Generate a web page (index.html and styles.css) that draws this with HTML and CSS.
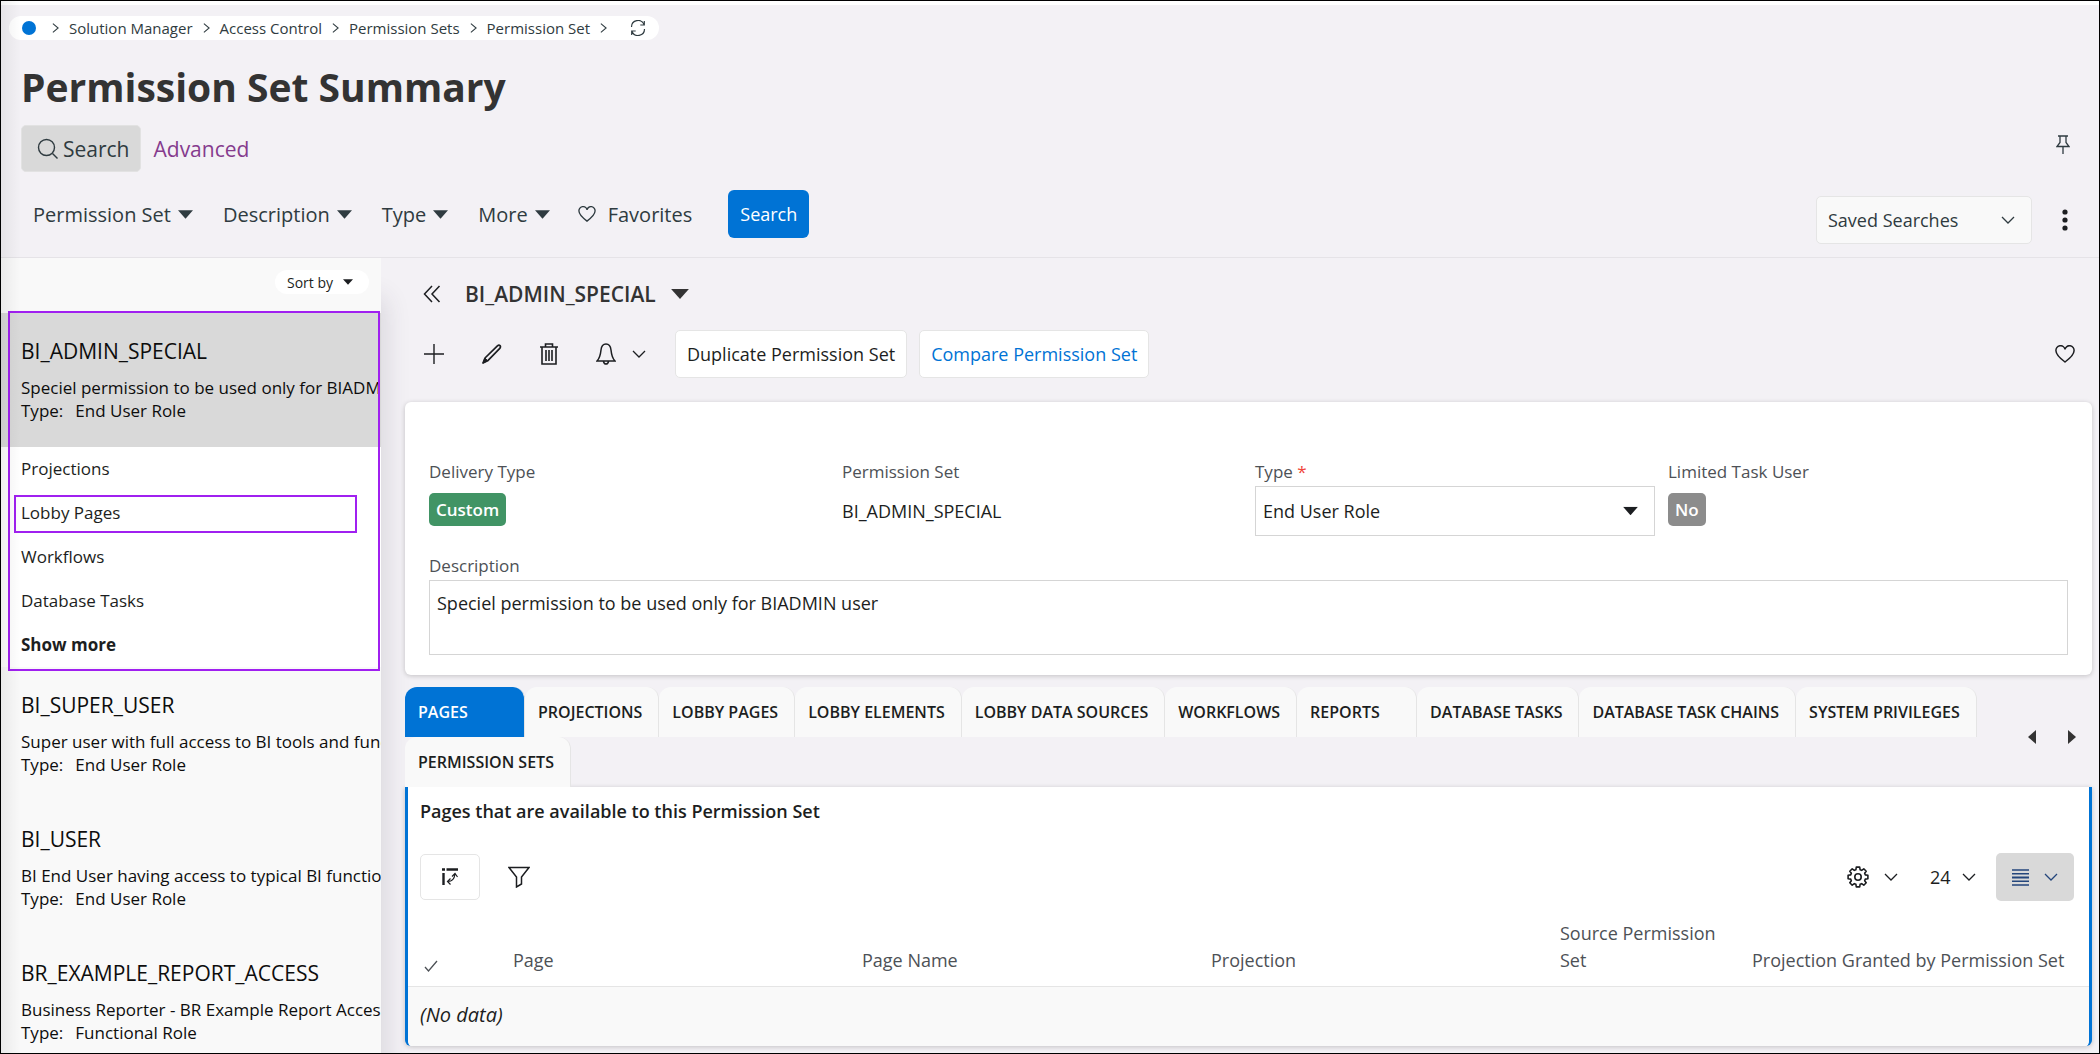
FILE: index.html
```html
<!DOCTYPE html>
<html lang="en">
<head>
    <meta charset="utf-8">
    <title>Permission Set Summary</title>
    <link rel="stylesheet" href="styles.css">
</head>
<body>
    <svg class="sprite" width="0" height="0">
        <symbol id="chevron" viewBox="0 0 14 8"><path d="M1 1l6 6 6-6" fill="none" stroke="currentColor" stroke-width="1.3"/></symbol>
        <symbol id="chevron-right" viewBox="0 0 8 12"><path d="M1 1l6 5-6 5" fill="none" stroke="currentColor" stroke-width="1.2"/></symbol>
        <symbol id="caret" viewBox="0 0 16 9"><path d="M0 0h16l-8 9z" fill="currentColor"/></symbol>
        <symbol id="heart" viewBox="0 0 20 18"><path d="M10 17C4 12.5 1 9.5 1 6A4.5 4.5 0 0 1 10 4.5 4.5 4.5 0 0 1 19 6C19 9.5 16 12.5 10 17z" fill="none" stroke="currentColor" stroke-width="1.5"/></symbol>
    </svg>

    <div class="page">
        <header class="header">
            <nav class="breadcrumb">
                <a href="#" class="home-dot" aria-label="Home"></a>
                <svg class="crumb-arrow"><use href="#chevron-right"/></svg>
                <a href="#">Solution Manager</a>
                <svg class="crumb-arrow"><use href="#chevron-right"/></svg>
                <a href="#">Access Control</a>
                <svg class="crumb-arrow"><use href="#chevron-right"/></svg>
                <a href="#">Permission Sets</a>
                <svg class="crumb-arrow"><use href="#chevron-right"/></svg>
                <a href="#">Permission Set</a>
                <svg class="crumb-arrow"><use href="#chevron-right"/></svg>
                <button class="icon-btn refresh" aria-label="Refresh">
                    <svg width="16" height="16" viewBox="0 0 16 16" fill="none" stroke="currentColor" stroke-width="1.2"><path d="M1.5 7A6.5 6.5 0 0 1 14 4.5M14.5 9A6.5 6.5 0 0 1 2 11.5M14.3 1v4h-4M1.7 15v-4h4"/></svg>
                </button>
            </nav>

            <h1>Permission Set Summary</h1>

            <div class="mode-row">
                <button class="mode-btn">
                    <svg width="22" height="22" viewBox="0 0 22 22" fill="none" stroke="currentColor" stroke-width="1.4"><circle cx="9.5" cy="9.5" r="8"/><path d="M15.5 15.5l5 5"/></svg>
                    Search
                </button>
                <a href="#" class="advanced">Advanced</a>
                <button class="icon-btn pin" aria-label="Pin">
                    <svg width="14" height="20" viewBox="0 0 14 20" fill="none" stroke="currentColor" stroke-width="1.3"><path d="M2 1h10M4 1v6.5L1 11.5h12L10 7.5V1M7 11.5V19"/></svg>
                </button>
            </div>

            <div class="filter-row">
                <button class="filter">Permission Set <svg class="caret"><use href="#caret"/></svg></button>
                <button class="filter">Description <svg class="caret"><use href="#caret"/></svg></button>
                <button class="filter">Type <svg class="caret"><use href="#caret"/></svg></button>
                <button class="filter">More <svg class="caret"><use href="#caret"/></svg></button>
                <button class="filter favorites"><svg width="18" height="16"><use href="#heart"/></svg> Favorites</button>
                <button class="search-btn">Search</button>
                <div class="saved">
                    <select class="saved-select" aria-label="Saved Searches">
                        <option>Saved Searches</option>
                    </select>
                    <svg class="chevron"><use href="#chevron"/></svg>
                </div>
                <button class="icon-btn dots" aria-label="More options">
                    <svg width="6" height="22" viewBox="0 0 6 22" fill="currentColor"><circle cx="3" cy="3" r="2.6"/><circle cx="3" cy="11" r="2.6"/><circle cx="3" cy="19" r="2.6"/></svg>
                </button>
            </div>
        </header>

        <div class="content">
            <aside class="sidebar">
                <div class="sort-row">
                    <button class="sort-btn">Sort by <svg width="10" height="6"><use href="#caret"/></svg></button>
                </div>
                <div class="selected-group">
                    <div class="item selected">
                        <h2>BI_ADMIN_SPECIAL</h2>
                        <p>Speciel permission to be used only for BIADMIN user</p>
                        <p><span class="item-label">Type:</span>End User Role</p>
                    </div>
                    <ul class="sub-list">
                        <li><a href="#">Projections</a></li>
                        <li class="marked"><a href="#">Lobby Pages</a></li>
                        <li><a href="#">Workflows</a></li>
                        <li><a href="#">Database Tasks</a></li>
                        <li><a href="#" class="show-more">Show more</a></li>
                    </ul>
                </div>
                <div class="item">
                    <h2>BI_SUPER_USER</h2>
                    <p>Super user with full access to BI tools and functionality</p>
                    <p><span class="item-label">Type:</span>End User Role</p>
                </div>
                <div class="item">
                    <h2>BI_USER</h2>
                    <p>BI End User having access to typical BI functionality</p>
                    <p><span class="item-label">Type:</span>End User Role</p>
                </div>
                <div class="item">
                    <h2>BR_EXAMPLE_REPORT_ACCESS</h2>
                    <p>Business Reporter - BR Example Report Access</p>
                    <p><span class="item-label">Type:</span>Functional Role</p>
                </div>
            </aside>

            <main class="main">
                <div class="record-title">
                    <button class="icon-btn" aria-label="Collapse list">
                        <svg width="18" height="18" viewBox="0 0 18 18" fill="none" stroke="currentColor" stroke-width="1.5"><path d="M9 1L1.5 9 9 17M16.5 1L9 9l7.5 8"/></svg>
                    </button>
                    <button class="record-name">BI_ADMIN_SPECIAL <svg width="18" height="10"><use href="#caret"/></svg></button>
                </div>

                <div class="toolbar">
                    <button class="icon-btn" aria-label="New">
                        <svg width="20" height="20" viewBox="0 0 20 20" fill="none" stroke="currentColor" stroke-width="1.4"><path d="M10 0v20M0 10h20"/></svg>
                    </button>
                    <button class="icon-btn" aria-label="Edit">
                        <svg width="20" height="20" viewBox="0 0 20 20" fill="none" stroke="currentColor" stroke-width="1.7" stroke-linejoin="round"><path d="M1 19l2-5L15.4 1.8q1.6-1.3 2.6-.2t-.2 2.800L5.600 16.800z"/><path d="M1 19l2-5 2.600 2.800z" fill="currentColor" stroke-width="1"/></svg>
                    </button>
                    <button class="icon-btn" aria-label="Delete">
                        <svg width="18" height="22" viewBox="0 0 18 22" fill="none" stroke="currentColor" stroke-width="1.6"><path d="M0 4h18M5.5 4V1h7v3M2 4v17h14V4"/><path d="M6 7v11M9 7v11M12 7v11"/></svg>
                    </button>
                    <button class="icon-btn bell" aria-label="Notifications">
                        <svg width="20" height="22" viewBox="0 0 20 22" fill="none" stroke="currentColor" stroke-width="1.5"><path d="M1 18c3-3 3.5-6 4-11 .4-4 2-6 5-6s4.6 2 5 6c.5 5 1 8 4 11zM7.5 18.5q.5 2.5 2.5 2.5t2.500-2.5"/></svg>
                        <svg class="chevron"><use href="#chevron"/></svg>
                    </button>
                    <button class="action-btn">Duplicate Permission Set</button>
                    <button class="action-btn action-link">Compare Permission Set</button>
                    <button class="icon-btn like" aria-label="Add to favorites">
                        <svg width="20" height="18"><use href="#heart"/></svg>
                    </button>
                </div>

                <section class="card">
                    <div class="fields">
                        <div class="field">
                            <span class="label">Delivery Type</span>
                            <span class="badge badge-green">Custom</span>
                        </div>
                        <div class="field">
                            <span class="label">Permission Set</span>
                            <span class="value">BI_ADMIN_SPECIAL</span>
                        </div>
                        <div class="field">
                            <label class="label" for="type">Type <span class="required">*</span></label>
                            <div class="select-wrap">
                                <select id="type" class="select">
                                    <option>End User Role</option>
                                </select>
                                <svg class="caret"><use href="#caret"/></svg>
                            </div>
                        </div>
                        <div class="field">
                            <span class="label">Limited Task User</span>
                            <span class="badge badge-grey">No</span>
                        </div>
                    </div>
                    <div class="description">
                        <label class="label" for="description">Description</label>
                        <textarea id="description" class="textarea">Speciel permission to be used only for BIADMIN user</textarea>
                    </div>
                </section>

                <div class="tab-bar">
                    <div class="tabs">
                        <button class="tab active">PAGES</button>
                        <button class="tab">PROJECTIONS</button>
                        <button class="tab">LOBBY PAGES</button>
                        <button class="tab">LOBBY ELEMENTS</button>
                        <button class="tab">LOBBY DATA SOURCES</button>
                        <button class="tab">WORKFLOWS</button>
                        <button class="tab">REPORTS</button>
                        <button class="tab">DATABASE TASKS</button>
                        <button class="tab">DATABASE TASK CHAINS</button>
                        <button class="tab">SYSTEM PRIVILEGES</button>
                        <button class="tab">PERMISSION SETS</button>
                    </div>
                    <div class="tab-nav">
                        <button class="icon-btn" aria-label="Previous tab"><svg width="8" height="14" viewBox="0 0 8 14"><path d="M8 0v14L0 7z" fill="currentColor"/></svg></button>
                        <button class="icon-btn" aria-label="Next tab"><svg width="8" height="14" viewBox="0 0 8 14"><path d="M0 0v14l8-7z" fill="currentColor"/></svg></button>
                    </div>
                </div>

                <section class="panel">
                    <h3>Pages that are available to this Permission Set</h3>
                    <div class="table-tools">
                        <button class="box-btn" aria-label="Arrange columns">
                            <svg width="18" height="18" viewBox="0 0 18 18" fill="none" stroke="currentColor"><path d="M1 1.5h3M5.5 1.5H17" stroke-width="2.4"/><path d="M2.5 5v12" stroke-width="2.4"/><path d="M7 13.5q6 0 7-7.5M11 8.5l3-3 2.5 3.5M9.5 10.5l-3 3 3 3" stroke-width="1.2"/></svg>
                        </button>
                        <button class="icon-btn" aria-label="Filter">
                            <svg width="22" height="22" viewBox="0 0 22 22" fill="none" stroke="currentColor" stroke-width="1.5"><path d="M1 1.5h20L13.5 11v7L8.5 21V11z"/></svg>
                        </button>
                        <button class="icon-btn gear" aria-label="Settings">
                            <svg width="22" height="22" viewBox="0 0 22 22" fill="none" stroke="currentColor" stroke-width="1.6" stroke-linejoin="round"><path d="M18.3 8.9L20.9 9.3v3.4L18.3 13.1 17.65 14.68 19.2 16.8 16.8 19.2 14.68 17.65 13.1 18.3 12.7 20.9H9.3L8.9 18.3 7.32 17.65 5.2 19.2 2.8 16.8 4.35 14.68 3.7 13.1 1.1 12.7V9.3L3.7 8.9 4.35 7.32 2.8 5.2 5.2 2.8 7.32 4.35 8.9 3.7 9.3 1.1h3.4L13.1 3.7 14.68 4.35 16.8 2.8 19.2 5.2 17.65 7.32z"/><circle cx="11" cy="11" r="3.2"/></svg>
                            <svg class="chevron"><use href="#chevron"/></svg>
                        </button>
                        <div class="page-size">
                            <select aria-label="Rows per page">
                                <option>24</option>
                            </select>
                            <svg class="chevron"><use href="#chevron"/></svg>
                        </div>
                        <button class="view-btn" aria-label="View">
                            <svg width="17" height="17" viewBox="0 0 17 17" stroke="currentColor" stroke-width="1.4"><path d="M0 1h17M0 4.7h17M0 12.3h17M0 16h17"/><path d="M0 8.5h17" stroke-width="2"/></svg>
                            <svg class="chevron"><use href="#chevron"/></svg>
                        </button>
                    </div>
                    <table class="table">
                        <thead>
                            <tr>
                                <th class="col-check"><svg width="14" height="12" viewBox="0 0 14 12" fill="none" stroke="currentColor" stroke-width="1.3"><path d="M1 7l3.5 4L13 1"/></svg></th>
                                <th>Page</th>
                                <th>Page Name</th>
                                <th>Projection</th>
                                <th class="col-source">Source Permission Set</th>
                                <th>Projection Granted by Permission Set</th>
                            </tr>
                        </thead>
                        <tbody>
                            <tr>
                                <td colspan="6">(No data)</td>
                            </tr>
                        </tbody>
                    </table>
                </section>
            </main>
        </div>
    </div>
</body>
</html>
```
FILE: styles.css
```css
* {
    box-sizing: border-box;
}
body {
    margin: 0;
    font-family: "Open Sans", "Noto Sans", sans-serif;
    font-size: 18px;
    color: #1c1e21;
}
button, select, textarea {
    font: inherit;
    color: inherit;
    margin: 0;
}
button {
    padding: 0;
    border: none;
    background: none;
    white-space: nowrap;
    cursor: pointer;
}
a {
    color: inherit;
    text-decoration: none;
}
svg {
    display: block;
    flex: none;
}
h1, h2, h3, p, ul {
    margin: 0;
    padding: 0;
}
.sprite {
    position: absolute;
}
.page {
    position: relative;
    display: flex;
    flex-direction: column;
    height: 100vh;
    overflow: hidden;
    border: 1px solid #000;
    background: #f3f1f5;
}
/* soft shade down the left edge */
.page::after {
    content: "";
    position: absolute;
    top: 0;
    bottom: 0;
    left: 0;
    width: 20px;
    background: linear-gradient(to right, rgba(0,0,0,0.06), rgba(0,0,0,0));
    pointer-events: none;
}
.icon-btn {
    display: flex;
    align-items: center;
}
.chevron {
    width: 14px;
    height: 8px;
}
.caret {
    width: 15px;
    height: 9px;
}

/* Header */
.header {
    flex: none;
    padding: 11px 0 13px 20px;
    border-top: 4px solid #fff;
    border-bottom: 1px solid #e5e3e7;
    color: #2f3b40;
}
.breadcrumb {
    display: flex;
    align-items: center;
    gap: 10px;
    width: max-content;
    height: 24px;
    margin-left: -12px;
    padding: 0 13px;
    border-radius: 12px;
    background: #fff;
    font-size: 15px;
}
.home-dot {
    width: 14px;
    height: 14px;
    margin-right: 6px;
    border-radius: 50%;
    background: #0073d5;
}
.crumb-arrow {
    width: 7px;
    height: 12px;
}
.refresh {
    margin-left: 13px;
}
h1 {
    margin-top: 20px;
    font-size: 39px;
    line-height: 54px;
    color: #333;
}
.mode-row {
    display: flex;
    align-items: center;
    gap: 13px;
    margin-top: 11px;
    padding-right: 29px;
    font-size: 21px;
}
.mode-btn {
    display: flex;
    align-items: center;
    gap: 4px;
    height: 47px;
    padding: 0 10px 0 15px;
    border: 1px solid #e2e2e2;
    border-radius: 5px;
    background: #d9d9d9;
}
.advanced {
    color: #853b8d;
}
.pin {
    margin-left: auto;
    margin-bottom: 8px;
}
.filter-row {
    display: flex;
    align-items: center;
    gap: 30px;
    margin-top: 12px;
    padding: 0 31px 0 12px;
}
.filter {
    display: flex;
    align-items: center;
    gap: 7px;
    font-size: 20px;
}
.favorites {
    gap: 12px;
    margin-left: -2px;
}
.search-btn {
    height: 48px;
    padding: 0 12px;
    margin-left: 6px;
    border-radius: 6px;
    background: #0073d5;
    color: #fff;
}
.saved {
    position: relative;
    width: 216px;
    margin-left: auto;
    margin-top: 12px;
}
.saved-select {
    appearance: none;
    width: 100%;
    height: 48px;
    padding: 0 11px;
    border: 1px solid #e5e5e5;
    border-radius: 5px;
    background: #f9f9f9;
}
.saved .chevron, .select-wrap .caret, .page-size .chevron {
    position: absolute;
    top: 50%;
    right: 17px;
    transform: translateY(-50%);
    pointer-events: none;
}
.dots {
    margin-top: 12px;
    color: #1c1e21;
}

/* Sidebar */
.content {
    display: flex;
    flex: 1;
    min-height: 0;
}
.sidebar {
    flex: none;
    width: 380px;
    background: #f9f9f9;
    box-shadow: 4px 40px 24px rgba(60,50,70,0.14);
}
.sort-row {
    display: flex;
    justify-content: flex-end;
    padding: 12px 12px 19px;
}
.sort-btn {
    display: flex;
    align-items: center;
    gap: 10px;
    height: 24px;
    padding: 0 16px 0 12px;
    border-radius: 12px;
    background: #fff;
    font-size: 14px;
}
.selected-group {
    position: relative;
}
.selected-group::after {
    content: "";
    position: absolute;
    top: -2px;
    right: 1px;
    bottom: -4px;
    left: 7px;
    border: 2px solid #a020f0;
    pointer-events: none;
}
.item {
    height: 134px;
    padding: 22px 0 0 20px;
    overflow: hidden;
    color: #0d0d0d;
}
.item.selected {
    background: #d9d9d9;
}
.item h2 {
    margin-bottom: 9px;
    font-size: 21px;
    font-weight: 400;
    line-height: 32px;
}
.item p {
    font-size: 17px;
    line-height: 23px;
    white-space: nowrap;
}
.item-label {
    margin-right: 12px;
}
.sub-list {
    list-style: none;
    background: #fff;
    font-size: 17px;
}
.sub-list li {
    display: flex;
    align-items: center;
    height: 44px;
    padding: 0 0 2px 20px;
}
.marked {
    position: relative;
}
.marked::after {
    content: "";
    position: absolute;
    top: 4px;
    right: 24px;
    bottom: 2px;
    left: 13px;
    border: 2px solid #a020f0;
    pointer-events: none;
}
.show-more {
    font-weight: 700;
}

/* Record */
.main {
    flex: 1;
    min-width: 0;
    padding: 20px 7px 0 24px;
}
.record-title {
    display: flex;
    align-items: center;
    gap: 24px;
    height: 32px;
    padding-left: 18px;
}
.record-name {
    display: flex;
    align-items: center;
    gap: 15px;
    font-size: 21px;
    font-weight: 600;
    color: #333;
}
.toolbar {
    display: flex;
    align-items: center;
    gap: 38px;
    margin-top: 20px;
    padding: 0 17px 0 19px;
}
.bell {
    gap: 16px;
    margin-right: -9px;
}
.action-btn {
    height: 48px;
    padding: 0 11px;
    border: 1px solid #e5e5e5;
    border-radius: 5px;
    background: #fff;
}
.action-link {
    margin-left: -26px;
    color: #0073d5;
}
.like {
    margin-left: auto;
}
.card {
    margin-top: 24px;
    padding: 56px 24px 20px;
    border-radius: 6px;
    background: #fff;
    box-shadow: 0 1px 5px rgba(0,0,0,0.2);
}
.fields {
    display: grid;
    grid-template-columns: repeat(4, 1fr);
    gap: 13px;
}
.field {
    display: flex;
    flex-direction: column;
    align-items: flex-start;
}
.label {
    display: block;
    font-size: 17px;
    line-height: 28px;
    color: #4d5156;
}
.required {
    color: #f04438;
}
.badge {
    margin-top: 7px;
    padding: 0 7px;
    border-radius: 5px;
    color: #fff;
    font-size: 17px;
    font-weight: 600;
    line-height: 33px;
}
.badge-green {
    background: #419465;
}
.badge-grey {
    background: #8c8c8c;
}
.value {
    line-height: 50px;
}
.select-wrap {
    position: relative;
    width: 100%;
}
.select {
    appearance: none;
    display: block;
    width: 100%;
    height: 50px;
    padding: 0 7px;
    border: 1px solid #d5d5d5;
    border-radius: 0;
    background: #fff;
}
.description {
    margin-top: 16px;
}
.textarea {
    display: block;
    width: 100%;
    height: 75px;
    padding: 9px 7px;
    border: 1px solid #d5d5d5;
    line-height: 26px;
    resize: none;
}

/* Tabs */
.tab-bar {
    display: flex;
    align-items: center;
    margin-top: 12px;
}
.tabs {
    display: flex;
    flex: 1;
    flex-wrap: wrap;
}
.tab {
    min-width: 120px;
    height: 50px;
    padding: 0 16px 0 13px;
    border-right: 1px solid #e5e5e5;
    border-radius: 12px 12px 0 0;
    background: #f9f9f9;
    font-size: 16px;
    font-weight: 600;
    text-align: left;
}
.tab.active {
    background: #0073d5;
    color: #fff;
}
.tab-nav {
    display: flex;
    gap: 32px;
    padding: 0 16px 0 40px;
    color: #333;
}
.panel {
    border: solid #0073d5;
    border-width: 0 3px;
    border-radius: 0 0 6px 6px;
    background: #fff;
    box-shadow: 0 1px 5px rgba(0,0,0,0.2);
    overflow: hidden;
}
.panel h3 {
    padding: 11px 12px 0;
    font-size: 18px;
    font-weight: 600;
    line-height: 26px;
}
.table-tools {
    display: flex;
    align-items: center;
    gap: 28px;
    margin-top: 29px;
    padding: 0 15px 0 12px;
}
.box-btn {
    display: flex;
    align-items: center;
    justify-content: center;
    width: 60px;
    height: 46px;
    border: 1px solid #e5e5e5;
    border-radius: 5px;
}
.gear {
    gap: 15px;
    margin-left: auto;
}
.page-size {
    position: relative;
}
.page-size select {
    appearance: none;
    width: 50px;
    padding: 0 4px;
    border: none;
    background: none;
}
.page-size .chevron {
    right: 0;
}
.view-btn {
    display: flex;
    align-items: center;
    gap: 15px;
    height: 48px;
    margin-left: -8px;
    padding: 0 16px;
    border-radius: 5px;
    background: #d9d9d9;
    color: #24467c;
}
.table {
    width: 100%;
    margin-top: 16px;
    border-collapse: collapse;
    table-layout: fixed;
}
.table th {
    height: 69px;
    padding: 0 12px 12px;
    border-bottom: 1px solid #e5e5e5;
    color: #4d5156;
    font-weight: 400;
    line-height: 27px;
    text-align: left;
    vertical-align: bottom;
}
.table .col-check {
    width: 93px;
    padding: 0 16px 14px;
}
.col-source {
    width: 192px;
}
.table td {
    height: 60px;
    padding: 0 12px 4px;
    background: #f9f9f9;
    font-size: 20px;
    font-style: italic;
}
```
